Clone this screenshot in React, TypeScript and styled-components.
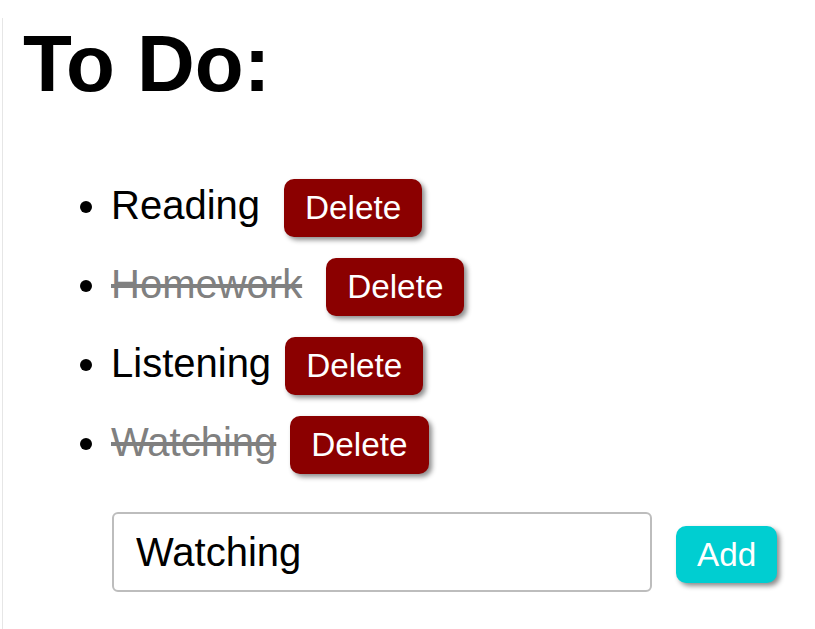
import React from "react";
import styled, { createGlobalStyle } from "styled-components";

const GlobalStyle = createGlobalStyle`
  html, body {
    margin: 0;
    padding: 0;
    background: #ffffff;
    font-family: "Liberation Sans", Arial, sans-serif;
  }
`;

const Page = styled.div`
  margin-left: 2px;
  border-left: 1px solid #e6e6e6;
  padding-left: 20px;
  min-height: 629px;
  box-sizing: border-box;
`;

const Title = styled.h1`
  margin: 18px 0 0;
  font-size: 80px;
  font-weight: 700;
  line-height: 92px;
  color: #000;
`;

const List = styled.ul`
  margin: 69px 0 0;
  padding-left: 88px;
  list-style: disc;
  font-size: 40px;
`;

const Item = styled.li`
  margin-bottom: 21px;
  line-height: 46px;
`;

const Row = styled.div`
  display: inline-flex;
  align-items: center;
  height: 58px;
  vertical-align: middle;
`;

const Label = styled.span<{ $done?: boolean; $gap: number }>`
  font-size: 40px;
  margin-bottom: 6px;
  margin-right: ${(p) => p.$gap}px;
  color: ${(p) => (p.$done ? "#808080" : "#000")};
  text-decoration: ${(p) => (p.$done ? "line-through" : "none")};
  text-decoration-color: #808080;
  white-space: nowrap;
`;

const Button = styled.button<{ $bg: string }>`
  font-family: "Liberation Sans", Arial, sans-serif;
  font-size: 33.3px;
  line-height: 38px;
  color: #fff;
  background: ${(p) => p.$bg};
  border: none;
  border-radius: 10px;
  padding: 10px 21px;
  height: 58px;
  box-shadow: 3px 3px 5px rgba(0, 0, 0, 0.45);
  cursor: pointer;
`;

const Form = styled.div`
  display: flex;
  align-items: center;
  padding-left: 89px;
  margin-top: 38px;
`;

const Input = styled.input`
  box-sizing: border-box;
  width: 540px;
  height: 80px;
  border: 2px solid #bdbdbd;
  border-radius: 6px;
  padding: 0 22px;
  font-family: "Liberation Sans", Arial, sans-serif;
  font-size: 40px;
  color: #000;
  outline: none;
`;

const AddButton = styled(Button)`
  height: 57px;
  margin-left: 24px;
  margin-top: 4px;
`;

const todos = [
  { text: "Reading", done: false, gap: 24 },
  { text: "Homework", done: true, gap: 24 },
  { text: "Listening", done: false, gap: 14 },
  { text: "Watching", done: true, gap: 14 },
];

export default function App() {
  return (
    <>
      <GlobalStyle />
      <Page>
        <Title>To Do:</Title>
        <List>
          {todos.map((t) => (
            <Item key={t.text}>
              <Row>
                <Label $done={t.done} $gap={t.gap}>
                  {t.text}
                </Label>
                <Button $bg="#8b0000">Delete</Button>
              </Row>
            </Item>
          ))}
        </List>
        <Form>
          <Input defaultValue="Watching" />
          <AddButton $bg="#00ced1">Add</AddButton>
        </Form>
      </Page>
    </>
  );
}
